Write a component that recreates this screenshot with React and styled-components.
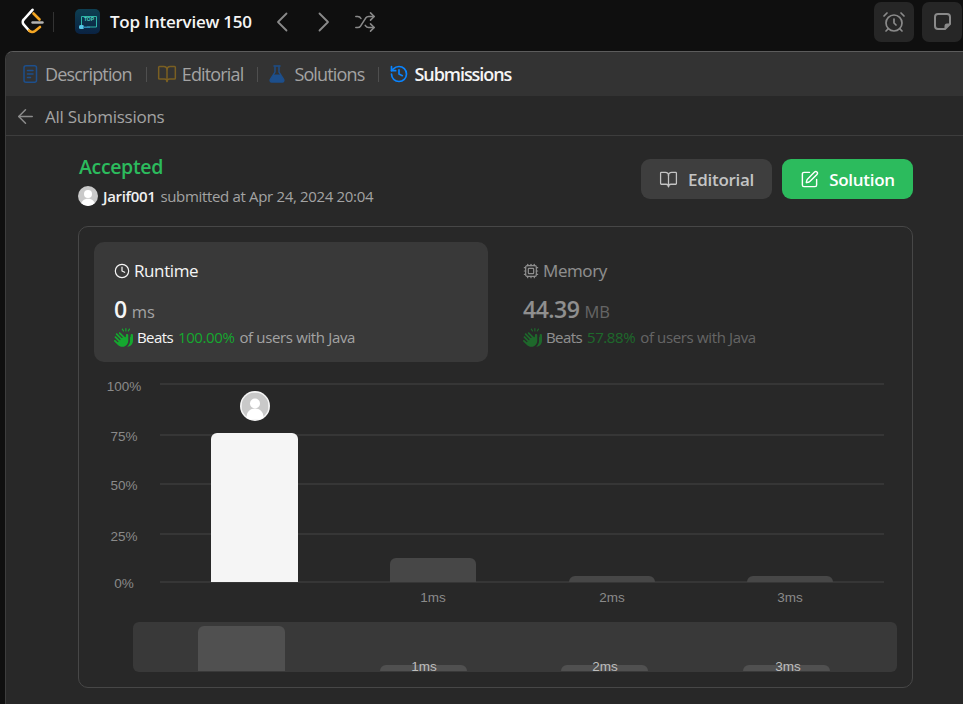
import React from 'react';
import styled, { createGlobalStyle } from 'styled-components';
import {
  AlarmClock,
  ArrowLeft,
  BookOpen,
  Clock,
  Cpu,
  History,
  Shuffle,
  SquarePen,
} from 'lucide-react';
import { FaHandsClapping } from 'react-icons/fa6';

const UI_FONT = '"Open Sans", "Noto Sans", sans-serif';

const GlobalStyle = createGlobalStyle`
  html, body {
    margin: 0;
    padding: 0;
    height: 100%;
    background: #0f0f0f;
    overflow: hidden;
  }
  body {
    font-family: ${UI_FONT};
  }
`;

const Page = styled.div`
  width: 963px;
  height: 704px;
  display: flex;
  flex-direction: column;
  overflow: hidden;
`;

const TopBar = styled.header`
  height: 51px;
  flex: none;
  display: flex;
  align-items: center;
  padding: 0 1px 8px 20px;
  box-sizing: border-box;
  background: #0f0f0f;
`;

const TopDivider = styled.span`
  width: 1px;
  height: 20px;
  background: #333333;
  margin: 0 0 0 7px;
  flex: none;
`;

const TabDivider = styled.span`
  width: 1px;
  height: 15px;
  background: #4f4f4f;
  margin: 0 10px 0 14px;
  flex: none;
`;

const ListIcon = styled.svg`
  flex: none;
  margin-left: 21px;
`;

const ListTitle = styled.span`
  color: #f5f5f5;
  font-size: 17px;
  font-weight: 600;
  margin-left: 10px;
  letter-spacing: -0.25px;
  white-space: nowrap;
`;

const NavIcons = styled.div`
  display: flex;
  align-items: center;
  gap: 18px;
  margin-left: 18px;
  color: #8a8a8a;
`;

const ToolButtons = styled.div`
  display: flex;
  gap: 8px;
  margin-left: auto;
`;

const ToolButton = styled.button`
  width: 40px;
  height: 40px;
  padding: 0;
  border: 0;
  border-radius: 7px;
  background: #262626;
  color: #8a8a8a;
  display: flex;
  align-items: center;
  justify-content: center;
`;

const Panel = styled.main`
  flex: 1;
  margin-left: 5px;
  border-top: 1px solid #5c5c5c;
  border-left: 1px solid #3d3d3d;
  border-top-left-radius: 8px;
  background: #282828;
  overflow: hidden;
  display: flex;
  flex-direction: column;
`;

const TabBar = styled.nav`
  height: 44px;
  flex: none;
  background: #333333;
  display: flex;
  align-items: center;
  padding-left: 16px;
`;

const Tab = styled.div`
  display: flex;
  align-items: center;
  gap: 5px;
  font-size: 18px;
  letter-spacing: ${(p) => (p.$active ? '-1.05px' : '-0.85px')};
  color: ${(p) => (p.$active ? '#f5f5f5' : '#a3a3a3')};
  font-weight: ${(p) => (p.$active ? 600 : 400)};
  white-space: nowrap;
`;

const SubHeader = styled.div`
  height: 40px;
  flex: none;
  box-sizing: border-box;
  padding: 1px 0 0 8px;
  border-bottom: 1px solid #3d3d3d;
  display: flex;
  align-items: center;
  gap: 8px;
  color: #a3a3a3;
  font-size: 17px;
  letter-spacing: -0.25px;
`;

const Content = styled.div`
  padding: 21px 50px 0 72px;
`;

const SummaryRow = styled.div`
  display: flex;
  justify-content: space-between;
  align-items: flex-start;
  height: 69px;
`;

const Status = styled.div`
  color: #2cbb5d;
  font-size: 19.5px;
  line-height: 20px;
  font-weight: 600;
  letter-spacing: -0.35px;
  padding-left: 1px;
`;

const Submitter = styled.div`
  display: flex;
  align-items: center;
  margin-top: 9px;
  font-size: 15px;
  line-height: 20px;
  letter-spacing: -0.33px;
  color: #a3a3a3;
`;

const Avatar = styled.span`
  width: 20px;
  height: 20px;
  margin-right: 5px;
  display: flex;
`;

const UserName = styled.span`
  color: #f0f0f0;
  font-weight: 600;
  margin-right: 5px;
`;

const SummaryActions = styled.div`
  display: flex;
  gap: 10px;
  margin-top: 2px;
`;

const ActionButton = styled.button`
  width: 131px;
  height: 40px;
  border: 0;
  border-radius: 9px;
  padding: 0;
  background: ${(p) => (p.$primary ? '#2cbb5d' : '#3e3e3e')};
  color: ${(p) => (p.$primary ? '#ffffff' : '#c4c4c4')};
  font-family: ${UI_FONT};
  font-size: 17px;
  font-weight: 600;
  letter-spacing: -0.3px;
  display: flex;
  align-items: center;
  justify-content: center;
  gap: 10px;
`;

const ResultCard = styled.section`
  height: 462px;
  box-sizing: border-box;
  border: 1px solid #474747;
  border-radius: 10px;
  padding: 15px;
`;

const StatRow = styled.div`
  display: flex;
  gap: 15px;
`;

const StatBox = styled.div`
  width: 394px;
  height: 120px;
  box-sizing: border-box;
  border-radius: 10px;
  padding: 18px 20px 0;
  background: ${(p) => (p.$active ? '#393939' : 'transparent')};
  opacity: ${(p) => (p.$active ? 1 : 0.5)};
`;

const StatTitle = styled.div`
  display: flex;
  align-items: center;
  gap: 4px;
  font-size: 17px;
  line-height: 22px;
  letter-spacing: -0.4px;
  color: #f5f5f5;
`;

const StatValue = styled.div`
  margin-top: 14px;
  display: flex;
  align-items: baseline;
  gap: 5px;
  line-height: 26px;
  color: #f5f5f5;
`;

const ValueNumber = styled.span`
  font-size: 23px;
  font-weight: 600;
  letter-spacing: -0.5px;
`;

const ValueUnit = styled.span`
  font-size: 16.5px;
  color: #a3a3a3;
`;

const BeatsLine = styled.div`
  margin-top: 2px;
  display: flex;
  align-items: center;
  font-size: 15px;
  line-height: 20px;
  letter-spacing: -0.35px;
  color: #a3a3a3;
`;

const BeatsLabel = styled.span`
  color: #f5f5f5;
  margin: 0 5px 0 4px;
  letter-spacing: -0.6px;
`;

const BeatsPercent = styled.span`
  color: #15a82f;
  letter-spacing: -0.4px;
  margin-right: 5px;
`;

const Chart = styled.svg`
  display: block;
  margin: 10px 0 0 0;
`;

const PersonAvatar = ({ size }) => (
  <svg width={size} height={size} viewBox="0 0 30 30">
    <defs>
      <clipPath id={`avatar-${size}`}>
        <circle cx="15" cy="15" r="15" />
      </clipPath>
    </defs>
    <circle cx="15" cy="15" r="15" fill="#c9c9c9" />
    <g clipPath={`url(#avatar-${size})`} fill="#fff">
      <circle cx="15" cy="12" r="6" />
      <path d="M4 30c0-7 5-11 11-11s11 4 11 11z" />
    </g>
  </svg>
);

const Logo = () => (
  <svg width="26" height="28" viewBox="0 0 26 28" fill="none" strokeLinecap="round" strokeLinejoin="round">
    <path d="M12.500 1.800 3.800 11.500a3.800 3.800 0 0 0 0 5.200L9 22.500" stroke="#fff" strokeWidth="2.600" />
    <path d="M13.500 5.500l6 6" stroke="#f5a623" strokeWidth="2.600" />
    <path d="M9 22.500a4.500 4.500 0 0 0 6 .5l5-4" stroke="#f5a623" strokeWidth="2.600" />
    <path d="M12.500 14.500h10" stroke="#b3b3b3" strokeWidth="2.400" />
  </svg>
);

const StudyPlanIcon = () => (
  <ListIcon width="25" height="25" viewBox="0 0 25 25">
    <defs>
      <linearGradient id="plan-bg" x1="0" y1="0" x2="0" y2="1">
        <stop offset="0" stopColor="#0e3f52" />
        <stop offset="1" stopColor="#0a2242" />
      </linearGradient>
    </defs>
    <rect width="25" height="25" rx="5" fill="url(#plan-bg)" />
    <path d="M6.500 16V7.500h15V18H12" fill="none" stroke="#2fb6a8" strokeWidth="1" />
    <text x="14" y="12" textAnchor="middle" fontSize="5" fontWeight="700" fontFamily='"Liberation Sans", sans-serif' fill="#4fd0c0">TOP</text>
    <rect x="4" y="16" width="5" height="4" rx="1.500" fill="#58c8e8" />
    <rect x="8" y="17.500" width="7" height="1.500" fill="#2a86b0" />
  </ListIcon>
);

const NavChevron = ({ left }) => (
  <svg width="24" height="24" viewBox="0 0 24 24" fill="none" stroke="currentColor" strokeWidth="1.800" strokeLinecap="round" strokeLinejoin="round">
    <path d={left ? 'M16.500 3.500 8 12l8.500 8.500' : 'M7.500 3.500 16 12l-8.500 8.500'} />
  </svg>
);

const NoteIcon = () => (
  <svg width="19" height="19" viewBox="0 0 19 19">
    <path d="M5 2h9a3 3 0 0 1 3 3v7l-5 5H5a3 3 0 0 1-3-3V5a3 3 0 0 1 3-3z" fill="none" stroke="currentColor" strokeWidth="2" strokeLinejoin="round" />
    <path d="M11.500 17v-3a2.500 2.500 0 0 1 2.500-2.500h3z" fill="currentColor" />
  </svg>
);

const DocIcon = () => (
  <svg width="18" height="20" viewBox="0 0 18 20" fill="none" stroke="#1d4f8c" strokeWidth="1.500" strokeLinecap="round" style={{ flex: 'none' }}>
    <rect x="2" y="1.800" width="12.500" height="16.500" rx="2" />
    <path d="M5.500 6.500h5.500M5.500 10h5.500M5.500 13.500h3" />
  </svg>
);

const FilledFlask = () => (
  <svg width="21" height="20" viewBox="0 0 21 20" style={{ flex: 'none' }}>
    <path d="M6 2h6" stroke="#1d4f8c" strokeWidth="1.500" strokeLinecap="round" />
    <path d="M7 2.500v5.500L2.500 15.200A1.700 1.700 0 0 0 3.900 18h10.200a1.700 1.700 0 0 0 1.400-2.800L11 8V2.500" fill="none" stroke="#1d4f8c" strokeWidth="1.400" />
    <path d="M5.500 10.500h7l3.200 5.200a1.500 1.500 0 0 1-1.200 2.300H3.500a1.500 1.500 0 0 1-1.200-2.300z" fill="#1d4f8c" />
  </svg>
);

const GRID_LINES = [
  { label: '100%', y: 12, labelY: 19 },
  { label: '75%', y: 63, labelY: 69 },
  { label: '50%', y: 112, labelY: 118 },
  { label: '25%', y: 162, labelY: 169 },
  { label: '0%', y: 210, labelY: 216 },
];

const MAIN_BARS = [
  { x: 117, w: 87, top: 61, fill: '#f5f5f5' },
  { x: 296, w: 86, top: 186, fill: '#474747', label: '1ms' },
  { x: 475, w: 86, top: 204, fill: '#474747', label: '2ms' },
  { x: 653, w: 86, top: 204, fill: '#474747', label: '3ms' },
];

const BRUSH_BARS = [
  { x: 104, top: 254, label: null },
  { x: 286, top: 293, label: '1ms', labelX: 330 },
  { x: 467, top: 293, label: '2ms', labelX: 511 },
  { x: 649, top: 293, label: '3ms', labelX: 694 },
];

const barPath = (x, top, bottom, w = 87, r = 6) =>
  `M${x} ${bottom}V${top + r}a${r} ${r} 0 0 1 ${r}-${r}h${w - 2 * r}a${r} ${r} 0 0 1 ${r} ${r}V${bottom}z`;

const DistributionChart = () => (
  <Chart width="803" height="312" viewBox="0 0 803 312" fontFamily='"Liberation Sans", Arial, sans-serif' fontSize="13.500">
    {GRID_LINES.map((line) => (
      <g key={line.label}>
        <line x1="66" x2="790" y1={line.y} y2={line.y} stroke="#444444" strokeWidth="1.200" />
        <text x="30" y={line.labelY} textAnchor="middle" fill="#8a8a8a">{line.label}</text>
      </g>
    ))}
    {MAIN_BARS.map((bar) => (
      <g key={bar.x}>
        <path d={barPath(bar.x, bar.top, 210, bar.w)} fill={bar.fill} />
        {bar.label && (
          <text x={bar.x + 43} y="230" textAnchor="middle" fill="#8a8a8a">{bar.label}</text>
        )}
      </g>
    ))}
    <circle cx="161" cy="34" r="15" fill="#f5f5f5" />
    <svg x="147.500" y="20.500" width="27" height="27">
      <circle cx="13.500" cy="13.500" r="13.500" fill="#c9c9c9" />
      <circle cx="13.500" cy="11" r="5" fill="#fff" />
      <path d="M5 25c0-6 4-9 8.500-9s8.500 3 8.500 9a13 13 0 0 1-17 0z" fill="#fff" />
    </svg>
    <rect x="39" y="250" width="764" height="50" rx="6" fill="#393939" />
    {BRUSH_BARS.map((bar) => (
      <g key={bar.x}>
        <path d={barPath(bar.x, bar.top, 299)} fill="#505050" />
        {bar.label && (
          <text x={bar.labelX} y="299" textAnchor="middle" fill="#bdbdbd">{bar.label}</text>
        )}
      </g>
    ))}
  </Chart>
);

const StatBlock = ({ active, icon, title, value, unit, percent }) => (
  <StatBox $active={active}>
    <StatTitle>{icon}{title}</StatTitle>
    <StatValue>
      <ValueNumber>{value}</ValueNumber>
      <ValueUnit>{unit}</ValueUnit>
    </StatValue>
    <BeatsLine>
      <FaHandsClapping size={19} color="#15a82f" />
      <BeatsLabel>Beats</BeatsLabel>
      <BeatsPercent>{percent}</BeatsPercent>
      of users with Java
    </BeatsLine>
  </StatBox>
);

export default function App() {
  return (
    <Page>
      <GlobalStyle />
      <TopBar>
        <Logo />
        <TopDivider />
        <StudyPlanIcon />
        <ListTitle>Top Interview 150</ListTitle>
        <NavIcons>
          <NavChevron left />
          <NavChevron />
          <Shuffle size={22} strokeWidth={1.7} />
        </NavIcons>
        <ToolButtons>
          <ToolButton><AlarmClock size={24} strokeWidth={1.7} /></ToolButton>
          <ToolButton><NoteIcon /></ToolButton>
        </ToolButtons>
      </TopBar>
      <Panel>
        <TabBar>
          <Tab>
            <DocIcon />
            Description
          </Tab>
          <TabDivider />
          <Tab>
            <BookOpen size={20} strokeWidth={1.8} color="#7a5f22" />
            Editorial
          </Tab>
          <TabDivider />
          <Tab>
            <FilledFlask />
            Solutions
          </Tab>
          <TabDivider />
          <Tab $active>
            <History size={20} strokeWidth={2} color="#0a84ff" />
            Submissions
          </Tab>
        </TabBar>
        <SubHeader>
          <ArrowLeft size={23} strokeWidth={1.6} color="#8a8a8a" />
          All Submissions
        </SubHeader>
        <Content>
          <SummaryRow>
            <div>
              <Status>Accepted</Status>
              <Submitter>
                <Avatar><PersonAvatar size={20} /></Avatar>
                <UserName>Jarif001</UserName>
                submitted at Apr 24, 2024 20:04
              </Submitter>
            </div>
            <SummaryActions>
              <ActionButton>
                <BookOpen size={19} strokeWidth={1.6} />
                Editorial
              </ActionButton>
              <ActionButton $primary>
                <SquarePen size={19} strokeWidth={1.8} />
                Solution
              </ActionButton>
            </SummaryActions>
          </SummaryRow>
          <ResultCard>
            <StatRow>
              <StatBlock
                active
                icon={<Clock size={16} strokeWidth={1.8} />}
                title="Runtime"
                value="0"
                unit="ms"
                percent="100.00%"
              />
              <StatBlock
                icon={<Cpu size={16} strokeWidth={1.8} />}
                title="Memory"
                value="44.39"
                unit="MB"
                percent="57.88%"
              />
            </StatRow>
            <DistributionChart />
          </ResultCard>
        </Content>
      </Panel>
    </Page>
  );
}
